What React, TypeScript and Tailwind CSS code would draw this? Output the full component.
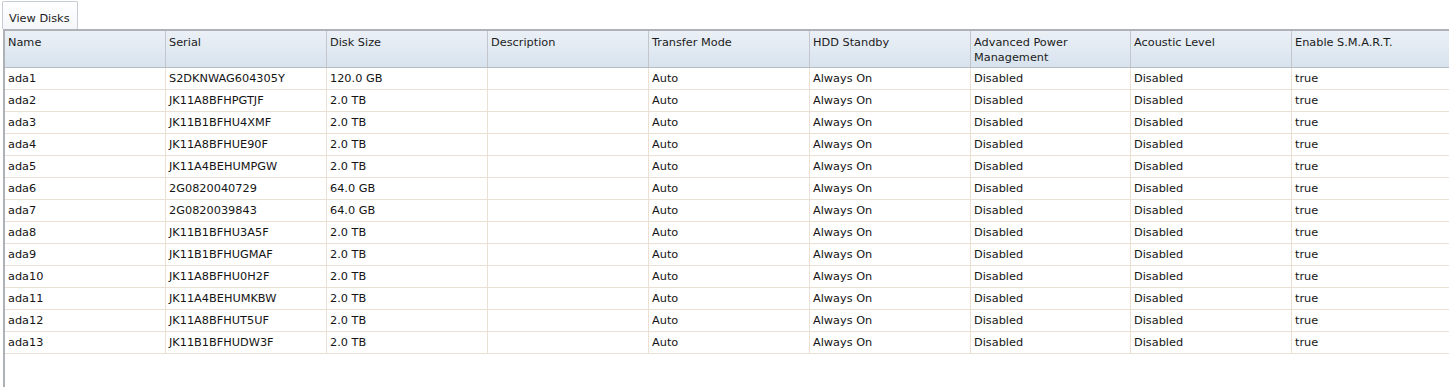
const columns = [
  'Name',
  'Serial',
  'Disk Size',
  'Description',
  'Transfer Mode',
  'HDD Standby',
  'Advanced Power Management',
  'Acoustic Level',
  'Enable S.M.A.R.T.',
]

const widths = [
  'w-[161px]',
  'w-[161px]',
  'w-[161px]',
  'w-[161px]',
  'w-[161px]',
  'w-[161px]',
  'w-[160px]',
  'w-[161px]',
  'w-[170px]',
]

const disks: [string, string, string][] = [
  ['ada1', 'S2DKNWAG604305Y', '120.0 GB'],
  ['ada2', 'JK11A8BFHPGTJF', '2.0 TB'],
  ['ada3', 'JK11B1BFHU4XMF', '2.0 TB'],
  ['ada4', 'JK11A8BFHUE90F', '2.0 TB'],
  ['ada5', 'JK11A4BEHUMPGW', '2.0 TB'],
  ['ada6', '2G0820040729', '64.0 GB'],
  ['ada7', '2G0820039843', '64.0 GB'],
  ['ada8', 'JK11B1BFHU3A5F', '2.0 TB'],
  ['ada9', 'JK11B1BFHUGMAF', '2.0 TB'],
  ['ada10', 'JK11A8BFHU0H2F', '2.0 TB'],
  ['ada11', 'JK11A4BEHUMKBW', '2.0 TB'],
  ['ada12', 'JK11A8BFHUT5UF', '2.0 TB'],
  ['ada13', 'JK11B1BFHUDW3F', '2.0 TB'],
]

export default function App() {
  return (
    <div
      className="h-[387px] w-[1449px] overflow-hidden bg-white pt-[1px] pl-[3px] text-[11.3px] text-[#141414]"
      style={{ fontFamily: '"DejaVu Sans", Verdana, sans-serif' }}
    >
      <div className="flex">
        <div className="-ml-[1px] h-[28px] w-[76px] rounded-t-[2px] border border-b-0 border-[#c5ccd6] bg-gradient-to-b from-white to-[#f4f6f9] pt-[9px] pl-[6px] text-[#1c1c1c]">
          View Disks
        </div>
      </div>
      <div className="h-[400px] w-[1500px] border-t-2 border-l-2 border-[#aeb2b7]">
        <div className="flex h-[37px] border-b border-[#b7bcc2] bg-gradient-to-b from-[#ebf0f6] to-[#d8e3ee]">
          {columns.map((c, i) => (
            <div
              key={c}
              className={`${widths[i]} shrink-0 border-[#c3c7cc] px-[3px] pt-[4px] leading-[15px] text-[#1c1c1c] ${i < columns.length - 1 ? 'border-r' : ''}`}
            >
              {c}
            </div>
          ))}
        </div>
        {disks.map(([name, serial, size]) => (
          <div key={name} className="flex h-[22px] border-b border-[#ecdfd4]">
            {[name, serial, size, '', 'Auto', 'Always On', 'Disabled', 'Disabled', 'true'].map((v, i) => (
              <div
                key={i}
                className={`${widths[i]} shrink-0 border-[#ecdfd4] px-[3px] leading-[21px] whitespace-nowrap ${i < 8 ? 'border-r' : ''}`}
              >
                {v}
              </div>
            ))}
          </div>
        ))}
      </div>
    </div>
  )
}
